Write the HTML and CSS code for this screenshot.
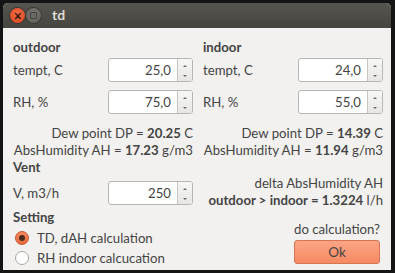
FILE: index.html
```html
<!DOCTYPE html>
<html>
<head>
<meta charset="utf-8">
<link rel="stylesheet" href="styles.css">
</head>
<body>
<div class="window">
  <div class="titlebar">
    <span class="tbtn close">
      <svg width="14" height="14" viewBox="0 0 14 14"><path d="M4.6 4.6 L9.4 9.4 M9.4 4.6 L4.6 9.4" stroke="#3a1a10" stroke-width="1.4" stroke-linecap="round"/></svg>
    </span>
    <span class="tbtn min"><span class="sq"></span></span>
    <span class="title">td</span>
  </div>
  <div class="content">
    <div class="col">
      <div class="head">outdoor</div>
      <div class="frow"><span class="lbl">tempt, C</span><div class="spin"><span class="val">25,0</span><span class="arr"><i class="up"></i><i class="dn"></i></span></div></div>
      <div class="frow r2"><span class="lbl">RH, %</span><div class="spin"><span class="val">75,0</span><span class="arr"><i class="up"></i><i class="dn"></i></span></div></div>
      <div class="res first">Dew point DP = <b>20.25</b> C</div>
      <div class="res">AbsHumidity AH = <b>17.23</b> g/m3</div>
      <div class="head vent">Vent</div>
      <div class="frow vrow"><span class="lbl">V, m3/h</span><div class="spin"><span class="val">250</span><span class="arr"><i class="up"></i><i class="dn"></i></span></div></div>
      <div class="head setting">Setting</div>
      <div class="radio on"><span class="rb"></span>TD, dAH calculation</div>
      <div class="radio"><span class="rb"></span>RH indoor calcucation</div>
    </div>
    <div class="col">
      <div class="head">indoor</div>
      <div class="frow"><span class="lbl">tempt, C</span><div class="spin"><span class="val">24,0</span><span class="arr"><i class="up"></i><i class="dn"></i></span></div></div>
      <div class="frow r2"><span class="lbl">RH, %</span><div class="spin"><span class="val">55,0</span><span class="arr"><i class="up"></i><i class="dn"></i></span></div></div>
      <div class="res first">Dew point DP = <b>14.39</b> C</div>
      <div class="res">AbsHumidity AH = <b>11.94</b> g/m3</div>
      <div class="res delta">delta AbsHumidity AH</div>
      <div class="res"><b>outdoor &gt; indoor = 1.3224</b> l/h</div>
      <div class="res ask">do calculation?</div>
      <div class="okrow"><button class="ok">Ok</button></div>
    </div>
  </div>
</div>
</body>
</html>
```
FILE: styles.css
```css
html, body {
  margin: 0;
  padding: 0;
}
body {
  width: 395px;
  height: 273px;
  background: #141414;
  overflow: hidden;
  font-family: Lato, "DejaVu Sans", sans-serif;
  font-size: 13.2px;
  color: #444444;
  white-space: nowrap;
}
.window {
  margin: 3px 0 0 3px;
  width: 388px;
  height: 267px;
  background: #f2f1f0;
  border-radius: 5px 5px 0 0;
  overflow: hidden;
}
.titlebar {
  height: 25px;
  background: linear-gradient(#57554f, #46443e);
  display: flex;
  align-items: center;
  padding-left: 7px;
}
.tbtn {
  width: 15px;
  height: 15px;
  border-radius: 50%;
  display: flex;
  align-items: center;
  justify-content: center;
  margin-right: 1px;
}
.close {
  background: radial-gradient(circle at 50% 40%, #f26c45, #d9431c);
  box-shadow: 0 0 0 1px #3a3833;
}
.min {
  background: radial-gradient(circle at 50% 40%, #7a7873, #5c5a55);
  box-shadow: 0 0 0 1px #3a3833;
}
.min .sq {
  width: 7px;
  height: 7px;
  border: 1px solid #45433f;
  border-radius: 1px;
  box-sizing: border-box;
  background: #6b6965;
}
.title {
  margin-left: 10px;
  font-weight: bold;
  color: #dfdbd2;
  font-size: 14px;
  margin-top: -2px;
}
.content {
  display: flex;
  gap: 10px;
  padding: 10px 0 0 10px;
}
.col {
  width: 180px;
  display: flex;
  flex-direction: column;
}
.head {
  height: 18px;
  line-height: 18px;
  font-weight: bold;
}
.frow {
  display: flex;
  align-items: center;
  justify-content: space-between;
  height: 24px;
  margin-top: 2px;
}
.frow.r2 { margin-top: 8px; }
.spin {
  width: 85px;
  height: 24px;
  box-sizing: border-box;
  border: 1px solid #b8b6b1;
  border-radius: 3px;
  background: #fff;
  display: flex;
}
.val {
  flex: 1;
  text-align: right;
  padding-right: 6px;
  line-height: 22px;
}
.arr {
  width: 15px;
  border-left: 1px solid #c6c4bf;
  background: linear-gradient(#f7f7f6, #e7e6e4);
  border-radius: 0 2px 2px 0;
  display: flex;
  flex-direction: column;
  align-items: center;
  justify-content: space-between;
  padding: 6px 0 4px;
  box-sizing: border-box;
}
.arr i {
  width: 0;
  height: 0;
  border-left: 2px solid transparent;
  border-right: 2px solid transparent;
}
.arr .up { border-bottom: 2px solid #6a6a6a; }
.arr .dn { border-top: 2px solid #6a6a6a; }
.res {
  text-align: right;
  height: 17px;
  line-height: 17px;
}
.res.first { margin-top: 11px; }
.vent { height: 16px; line-height: 16px; }
.vrow { margin-top: 6px; }
.setting { margin-top: 4px; height: 16px; line-height: 16px; }
.radio {
  height: 20px;
  display: flex;
  align-items: center;
  margin-left: 2px;
}
.setting + .radio { margin-top: 3px; }
.rb {
  width: 14px;
  height: 14px;
  border-radius: 50%;
  box-sizing: border-box;
  border: 1px solid #a9a7a2;
  background: #fff;
  margin-right: 8px;
  display: flex;
  align-items: center;
  justify-content: center;
}
.radio.on .rb {
  background: linear-gradient(#f7885e, #ea6a3f);
  border-color: #c9552e;
}
.radio.on .rb::after {
  content: "";
  width: 6px;
  height: 6px;
  border-radius: 50%;
  background: #4a2a1e;
}
.res.delta { margin-top: 16px; }
.res.ask { margin-top: 12px; padding-right: 3px; }
.okrow {
  display: flex;
  justify-content: flex-end;
  margin-top: 2px;
  padding-right: 3px;
}
.ok {
  width: 86px;
  height: 24px;
  border: 1px solid #d67553;
  border-radius: 3px;
  background: linear-gradient(#fba586, #f68a62);
  font-family: inherit;
  font-size: 13.5px;
  color: #444444;
  padding: 0;
}
```
